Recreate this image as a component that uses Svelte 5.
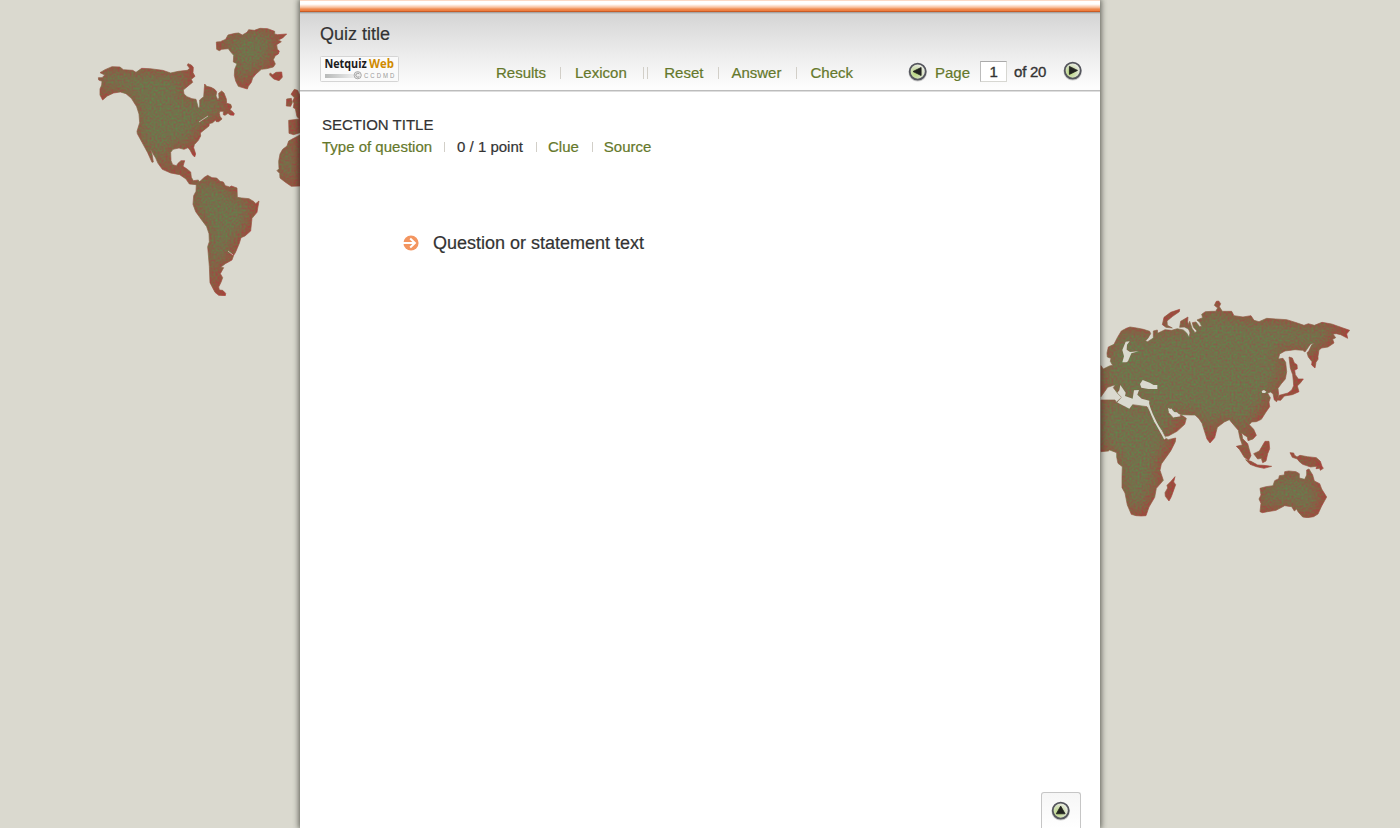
<script>
  const americas = [
    'M30 158L45 149L66 140L90 141L100 149L128 151L138 157L155 145L180 146L218 151L242 159L265 154L292 151L299 145L292 136L294 131L304 135L310 142L309 158L315 169L304 178L308 187L299 194L280 210L282 222L291 230L306 236L318 238L325 264L329 261L329 240L341 230L344 192L350 199L363 202L374 208L380 215L378 228L384 240L387 233L386 220L395 213L402 219L409 237L410 250L422 253L425 261L420 269L428 275L433 281L431 286L421 285L414 280L405 286L400 284L400 274L390 274L388 280L390 289L396 297L386 305L379 305L376 301L368 308L358 311L357 318L347 326L331 339L332 348L325 361L313 374L311 383L317 402L314 411L308 405L300 390L294 383L282 388L267 384L249 388L242 397L243 422L248 434L259 437L264 430L273 422L284 422L279 439L291 447L302 456L304 472L310 482L325 480L328 487L319 494L298 492L288 477L269 464L242 459L217 448L204 430L197 414L181 388L186 402L190 426L186 427L173 398L156 367L142 341L141 334L149 308L147 282L140 260L124 235L108 221L91 216L71 219L52 228L38 240L30 225L30 207L35 195L36 184L26 180L25 173L36 173L44 165Z',
    'M379 66L391 65L407 58L414 45L435 40L446 39L457 45L471 37L476 29L493 31L510 25L533 26L554 34L554 42L563 44L590 42L578 54L565 60L574 65L560 74L562 88L568 93L565 102L556 107L550 119L553 125L556 132L550 141L530 146L514 148L498 162L488 174L484 187L475 199L472 207L445 199L437 183L433 166L434 148L441 131L430 126L431 106L423 97L415 86L395 88L388 92L380 88Z',
    'M540 159L548 164L558 157L575 156L577 172L567 182L551 177L539 165Z',
    'M613 208L623 211L630 227L630 298L621 290L616 266L610 263L612 249L608 244L613 233L603 223ZM590 237L604 235L607 248L602 259L589 258ZM596 301L630 297V338L611 344L597 340Z',
    'M605 358L630 345V498L604 499L584 485L570 474L569 460L561 452L567 446L566 424L570 402L578 388L591 378L596 363Z',
    'M319 492L332 482L343 472L353 466L366 473L380 474L390 484L400 486L406 497L419 501L424 498L441 504L442 532L455 534L477 536L492 545L497 551L507 543L501 577L486 595L482 633L465 648L453 653L448 670L436 698L431 706L426 720L406 731L392 742L401 743L391 761L398 773L393 787L386 801L388 810L398 811L407 820L406 827L386 826L375 817L360 788L358 739L353 680L358 665L357 641L350 620L335 600L317 575L309 553L311 527L318 514Z'
  ];

  const eurasia = [
    'M18 212L25 222L43 213L53 211L46 199L48 190L37 186L36 174L40 156L57 148L67 128L79 108L94 100L105 96L125 99L145 103L164 109L167 116L158 131L151 137L158 140L175 129L175 108L187 105L188 115L210 104L230 106L247 101L265 105L275 114L282 127L285 114L278 94L284 79L291 100L300 113L306 108L295 96L292 83L303 81L314 95L320 94L314 82L306 75L323 68L320 58L331 50L351 49L362 49L368 39L358 31L364 19L371 18L377 26L373 35L382 49L410 49L417 62L444 66L468 62L477 76L492 80L515 70L542 72L575 74L607 84L627 91L640 86L658 91L681 82L710 87L744 99L764 106L755 117L758 130L737 119L724 116L714 117L722 128L713 133L717 144L699 156L680 159L672 165L669 184L669 193L663 202L660 219L650 210L651 200L640 186L636 173L641 169L650 150L658 144L646 148L630 171L623 166L600 164L570 168L554 177L550 192L564 190L572 202L575 230L571 252L559 266L549 280L551 299L545 320L538 315L534 296L526 291L518 295L526 308L522 321L524 335L513 351L499 373L484 380L470 381L463 389L476 403L484 421L474 432L459 437L457 426L446 419L440 413L443 431L458 446L468 482L461 496L448 487L434 464L424 454L442 450L435 430L430 406L418 392L403 374L388 381L367 397L359 428L345 444L336 432L321 385L312 371L300 360L287 360L259 359L237 350L230 340L219 343L221 353L235 369L249 364L259 360L274 370L269 388L246 409L220 423L210 424L202 407L187 387L174 363L163 342L159 319L132 311L116 314L107 340L91 336L79 320L64 322L80 307L67 294L55 278L61 269L38 277L18 305Z',
    'M18 315L60 315L64 322L80 329L97 339L113 329L156 335L166 352L177 380L192 399L209 428L220 434L242 429L241 440L227 468L199 507L195 526L205 556L184 580L179 607L162 636L153 662L139 663L123 662L109 658L97 630L90 594L81 578L81 545L82 515L69 505L65 486L65 473L44 465L40 468L18 470Z',
    'M240 545L236 561L242 569L229 605L222 618L211 604L210 593L218 579L216 571L228 559Z',
    'M254 43L253 50L233 64L216 78L217 91L232 99L213 97L202 89L207 67L227 52ZM279 66L278 79L282 103L268 96L254 97L257 79ZM582 186L592 189L598 204L606 209L607 221L599 226L601 239L610 252L625 252L616 264L607 273L612 290L592 299L568 303L557 316L545 315L553 301L579 294L591 284L596 272L595 258L593 239L586 219ZM585 473L596 474L598 480L606 486L615 481L637 485L664 488L676 499L681 514L685 520L676 526L674 520L663 521L665 514L647 516L623 508L613 500L607 492L592 487ZM476 476L493 468L510 439L522 439L524 461L518 476L513 498L503 503L499 490L488 492ZM452 494L468 499L479 505L488 510L506 511L530 514L507 520L484 515L465 508Z',
    'M495 580L513 575L534 572L539 557L551 551L553 542L568 540L569 530L581 528L603 530L613 536L613 549L629 553L635 540L635 525L642 522L653 540L658 558L674 566L680 582L695 606L680 633L669 657L656 665L637 668L623 666L609 650L605 642L598 648L590 635L569 632L543 646L518 650L502 653L495 650L498 625L492 612L498 600Z'
  ];

  const water = 'M82 165L92 140L104 139L96 149L95 164L105 171L131 169L109 175L99 199L94 202L82 202L87 184ZM135 267L143 255L164 263L176 270L187 270L187 282L160 282L139 278ZM76 270L92 293L90 303L113 311L117 286L132 285L127 299L140 311L163 317L162 330L115 325L103 341L92 335L67 322L80 307L67 293L73 286ZM219 338L229 344L238 352L246 352L257 364L243 366L224 355ZM500 288L507 285L514 290L510 294L502 294Z';
</script>

<main class="stage">
  <svg class="world" viewBox="0 0 1400 828" aria-hidden="true">
    <defs>
      <filter id="earth" x="-5%" y="-5%" width="110%" height="110%" color-interpolation-filters="sRGB">
        <feGaussianBlur in="SourceAlpha" stdDeviation="8" />
        <feOffset dx="-3" dy="-1" result="depth" />
        <feColorMatrix in="depth" type="matrix" values="0 0 0 -.21 .66  0 0 0 .19 .255  0 0 0 .07 .225  0 0 0 0 1" result="tone" />
        <feTurbulence type="fractalNoise" baseFrequency=".5" numOctaves="2" seed="8" />
        <feColorMatrix type="matrix" values="1 0 0 0 0  -1 0 0 0 1  0 0 0 0 .5  0 0 0 0 1" result="grain" />
        <feComposite in="tone" in2="grain" operator="arithmetic" k1="0" k2="1" k3=".26" k4="-.13" />
        <feComposite in2="SourceAlpha" operator="in" />
      </filter>
    </defs>
    <g filter="url(#earth)">
      <g transform="translate(90 20) scale(.333333)" stroke="#000" stroke-width="2" stroke-linejoin="round">
        {#each americas as land}<path d={land} />{/each}
      </g>
    </g>
    <g filter="url(#earth)">
      <g transform="translate(1095 295) scale(.333333)" stroke="#000" stroke-width="2" stroke-linejoin="round">
        {#each eurasia as land}<path d={land} />{/each}
      </g>
    </g>
    <g transform="translate(1095 295) scale(.333333)" fill="#dad9cf"><path d={water} /></g>
    <g fill="none" stroke="#dad9cf" stroke-width=".7">
      <path d="M199 122L208 116M228 251L233 255" />
      <path d="M1148 403C1151 416 1158 426 1165 439" stroke-width="1.8" />
    </g>
  </svg>

  <div class="page">
    <div class="stripe"></div>
    <header>
      <h1>Quiz title</h1>
      <div class="bar">
        <svg class="logo" width="79" height="26" viewBox="0 0 79 26">
          <defs><linearGradient id="fade"><stop stop-color="#b8bab9" /><stop offset="1" stop-color="#efefef" /></linearGradient></defs>
          <rect x=".5" y=".5" width="78" height="25" rx="1" fill="#fafafa" stroke="#d5d5d5" />
          <text transform="translate(4.4 12) scale(.9 1)" fill="#1c1c1c">Netquiz</text>
          <text transform="translate(49 12) scale(.95 1)" fill="#d08a00">Web</text>
          <path d="M5 18H35V22H5Z" fill="url(#fade)" />
          <circle cx="37.7" cy="19.2" r="3.6" fill="#eee" stroke="#aaa" />
          <path d="M39.3 17.8A2 2 0 1 0 39.3 20.6" fill="none" stroke="#999" />
          <text class="maker" transform="translate(44 22) scale(.75 1)" fill="#999">CCDMD</text>
        </svg>
        <nav>
          <a href="#results">Results</a><i></i><a href="#lexicon">Lexicon</a><i class="double"></i><a href="#reset">Reset</a><i class="before-answer"></i><a href="#answer">Answer</a><i class="before-check"></i><a href="#check">Check</a>
        </nav>
        <div class="pager">
          {@render round('M13.1 5.5V13.5L5 9.5Z')}
          <a href="#page">Page</a>
          <input value="1" aria-label="Page" />
          <span>of 20</span>
          {@render round('M6.4 5.4V13.4L14.5 9.4Z')}
        </div>
      </div>
    </header>

    <section>
      <h2>SECTION TITLE</h2>
      <div class="meta">
        <a href="#type">Type of question</a><i></i><span>0 / 1 point</span><i></i><a href="#clue">Clue</a><i></i><a href="#source">Source</a>
      </div>
      <div class="question">
        <svg width="16" height="16" viewBox="0 0 16 16"><circle cx="8" cy="8" r="7.6" fill="#f39560" /><path d="M0 8H12M7.2 3.5L11.9 8L7.2 12.5" fill="none" stroke="#fff" stroke-width="2" /></svg>
        <p>Question or statement text</p>
      </div>
    </section>
    <a class="top" href="#top" aria-label="Top">{@render round('M5.3 12.8H14.1L9.7 5.1Z')}</a>
  </div>
</main>

{#snippet round(arrow)}
  <svg class="round" width="20" height="20" viewBox="0 0 20 20">
    <defs><radialGradient id="bead" cx=".36" cy=".62" r=".65"><stop stop-color="#b8d77a" /><stop offset=".55" stop-color="#d2dfb8" /><stop offset="1" stop-color="#eeeeea" /></radialGradient></defs>
    <circle cx="9.7" cy="10.4" r="9.2" fill="#777" opacity=".35" />
    <circle cx="9.7" cy="9.6" r="8" fill="url(#bead)" stroke="#55565e" stroke-width="1.8" />
    <path d={arrow} fill="#222320" stroke="#222320" stroke-width=".8" stroke-linejoin="round" />
  </svg>
{/snippet}

<style>
  :global(body) { margin: 0; overflow: hidden; }
  .stage { position: relative; width: 1400px; height: 828px; overflow: hidden; background: #dad9cf; color: #333; font: 15px/18px "Liberation Sans", Arial, sans-serif; -webkit-text-stroke: .2px; }
  .world { position: absolute; inset: 0; width: 1400px; height: 828px; }
  .page { position: relative; box-sizing: border-box; width: 800px; height: 828px; margin: 0 auto; display: flex; flex-direction: column; background: #fff; box-shadow: 0 0 6px 1px rgba(35, 38, 30, .72); }
  .stripe { height: 14px; background: linear-gradient(#fbd9c6 0 1px, #fff 1px 4px, #fff0e7 5px, #fbd8c3 6px, #fac8aa 7px, #f5ad82 8px, #ef8b52 9px, #ed7939 11px, #c85b25 11px 12px, #a7a7a7 12px 13px, #c5c5c5 13px); }
  header { box-sizing: border-box; height: 78px; padding: 10px 0 0 20px; background: linear-gradient(#d5d5d5, #ececec 52%, #fdfdfd 96%); border-bottom: 1px solid #dedede; box-shadow: inset 0 -1px #bcbcbc; }
  h1, h2, p { margin: 0; font-weight: 400; }
  h1 { font-size: 18px; line-height: 20px; }
  h2 { font-size: 15px; line-height: 18px; }
  a { color: #65782b; text-decoration: none; white-space: nowrap; }
  .bar { display: flex; height: 34px; padding-top: 12px; }
  .logo { flex: none; font: bold 12px "Open Sans", sans-serif; -webkit-text-stroke: 0; }
  .maker { font: 8px "Liberation Sans", sans-serif; letter-spacing: 2.7px; }
  nav { display: flex; margin: 8px 0 0 97px; width: 412px; }
  i { flex: none; width: 1px; height: 12px; margin: 3px 14px 0; background: #d2cfc8; }
  .double { width: 3px; margin: 3px 16.5px 0 16px; border: solid #d2cfc8; border-width: 0 1px; background: none; }
  .before-answer { margin: 3px 12px 0 15px; }
  .before-check { margin: 3px 13px 0 15px; }
  .pager { display: flex; align-items: flex-start; }
  .round { flex: none; display: block; margin-top: 6px; }
  .pager a { margin: 8px 10px 0 7px; }
  input { box-sizing: border-box; width: 27px; height: 21px; margin: 5px 7px 0 0; padding: 0; border: 1px solid #d7d7d2; border-top-color: #aaa; border-left-color: #bbb; background: #fff; color: #333; font: inherit; -webkit-text-stroke: .35px; text-align: center; }
  .pager span { margin: 7px 17px 0 0; white-space: nowrap; letter-spacing: -.25px; -webkit-text-stroke: .35px; }
  .pager span + .round { margin-top: 5px; }
  section { flex: 1; padding: 24px 22px; }
  .meta { display: flex; margin-top: 4px; }
  .meta i { height: 10px; margin: 4px 12px 0; }
  .meta span ~ i { margin: 4px 11px 0 13px; }
  .question { display: flex; align-items: center; gap: 14px; margin: 77px 0 0 81px; }
  .question p { font-size: 18px; line-height: 20px; }
  .top { align-self: flex-end; box-sizing: border-box; width: 40px; height: 36px; margin-right: 19px; border: 1px solid #c6c6c6; border-bottom: 0; border-radius: 3px 3px 0 0; background: linear-gradient(#f6f6f6, #fff); padding: 2px 9px; }
</style>
